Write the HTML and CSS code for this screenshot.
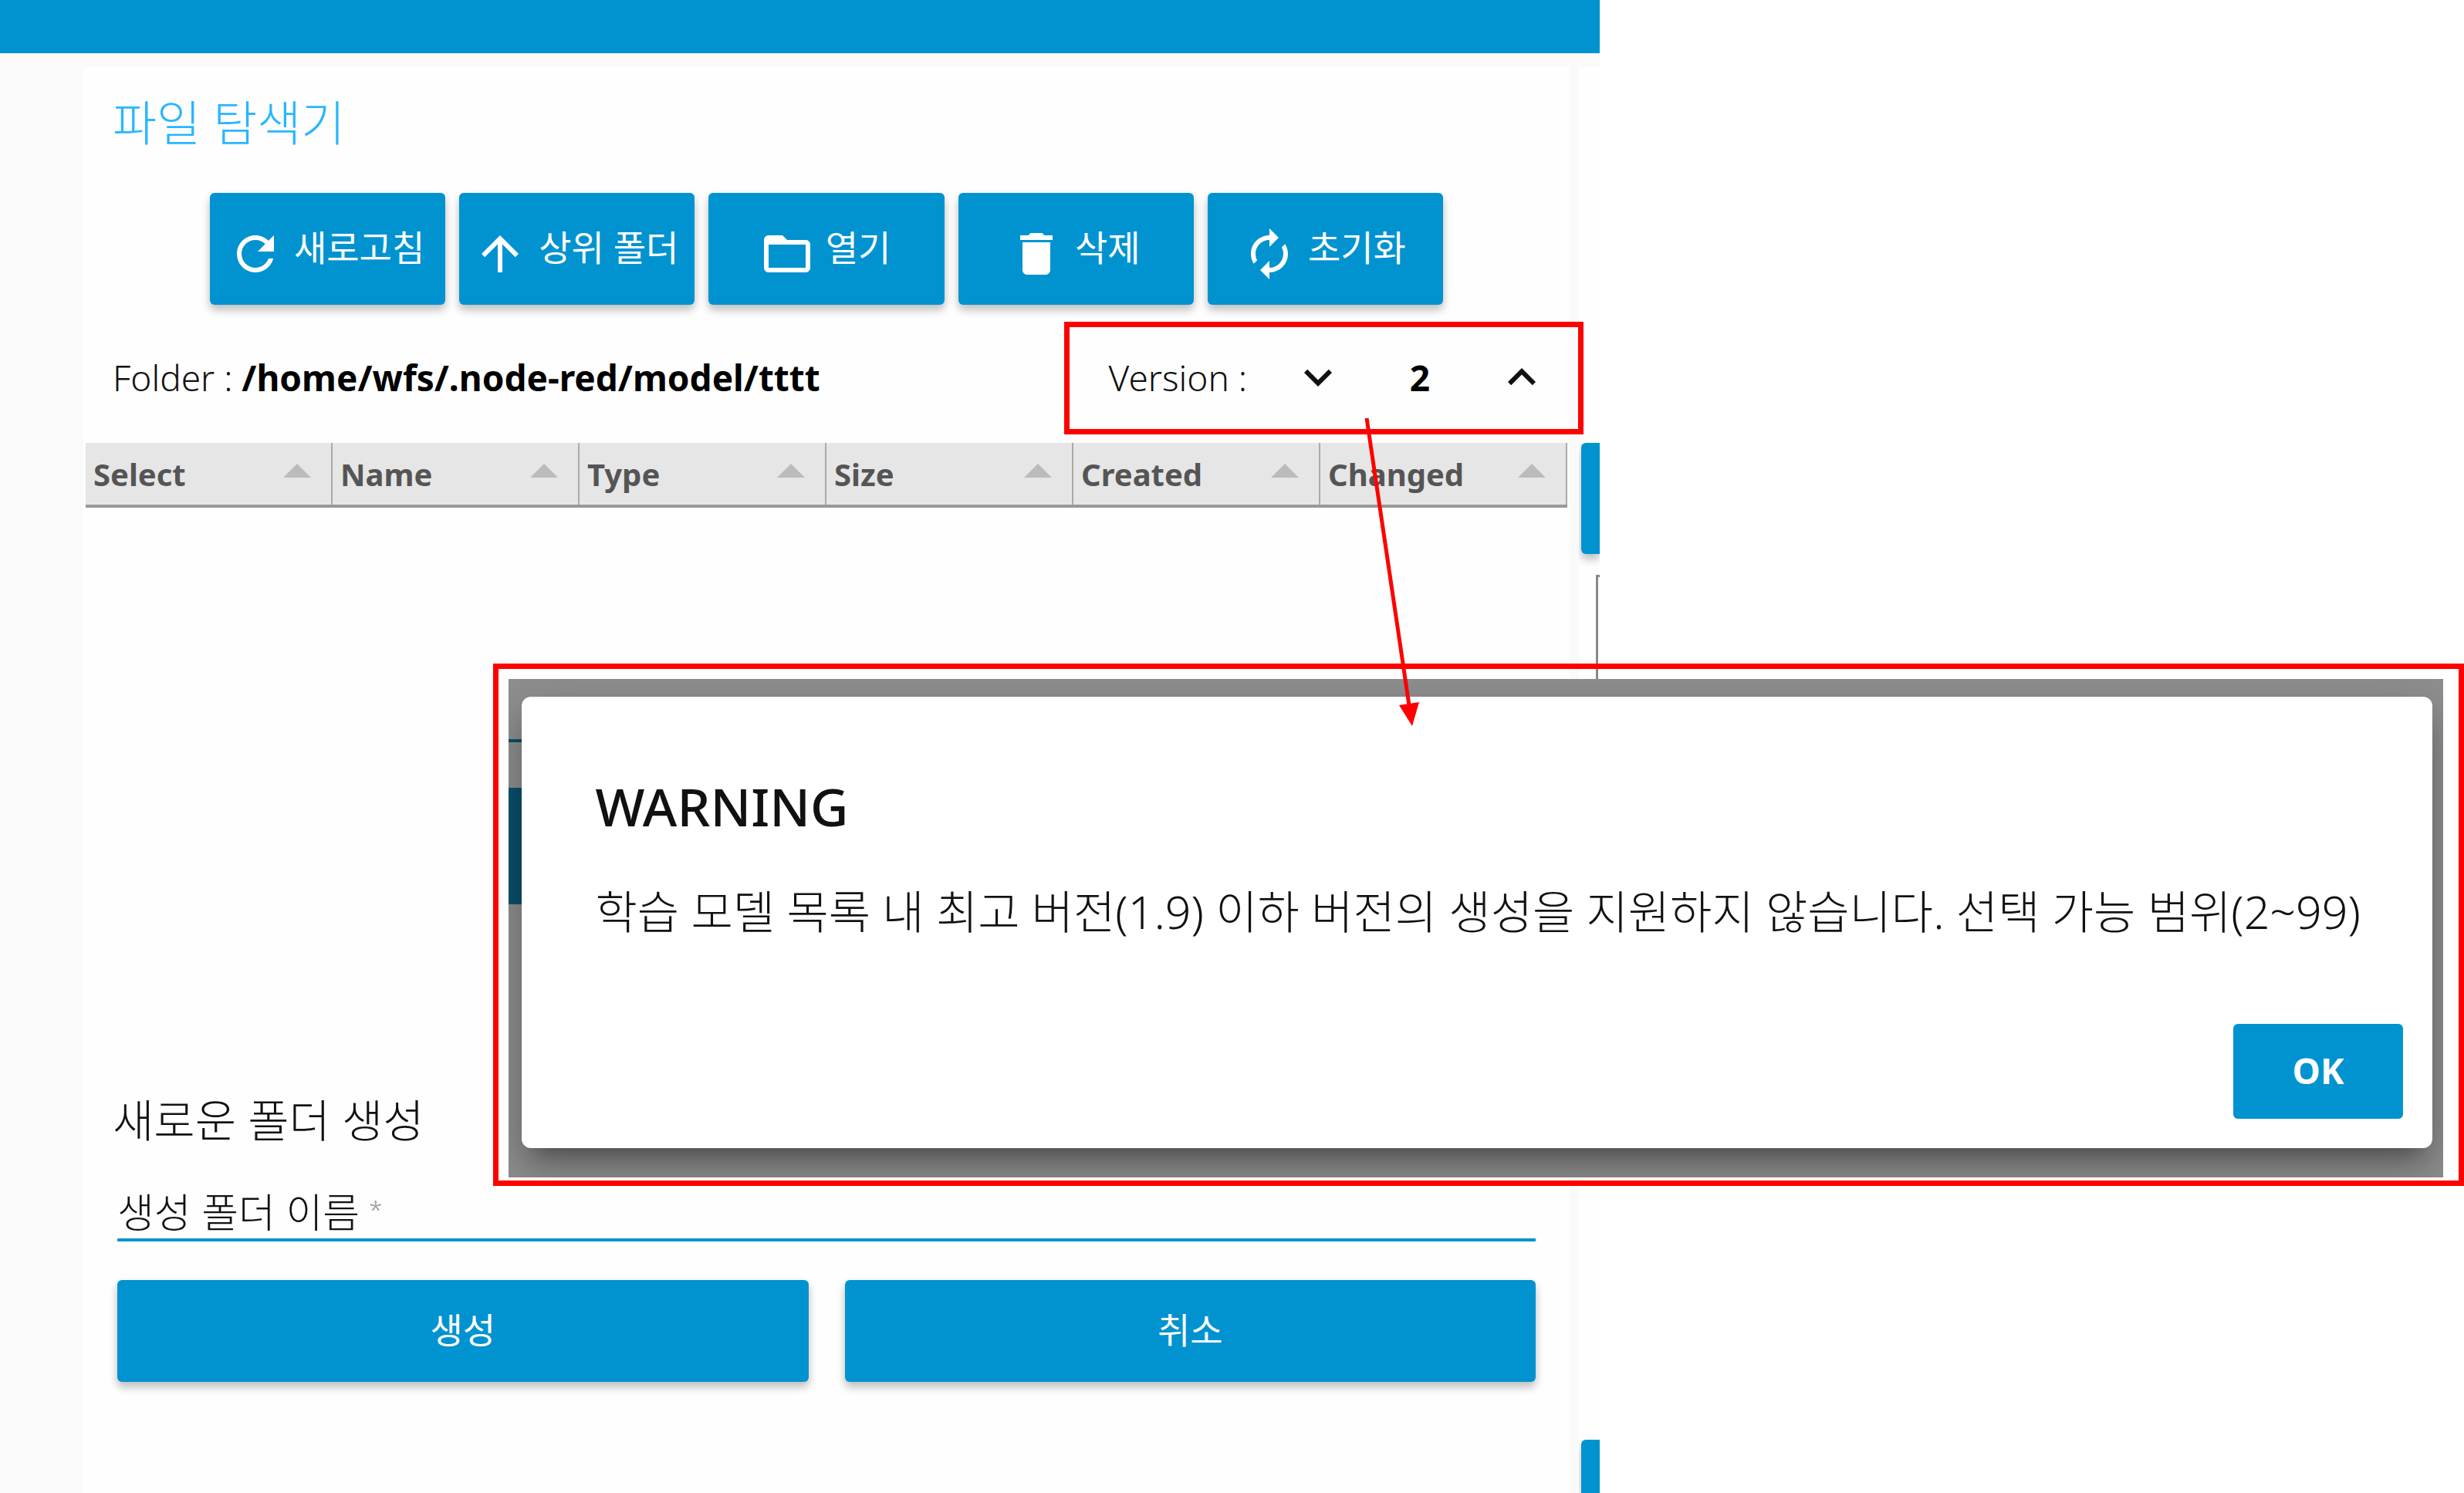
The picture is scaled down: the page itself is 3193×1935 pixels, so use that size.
FILE: index.html
```html
<!DOCTYPE html>
<html lang="ko">
<head>
<meta charset="utf-8">
<meta name="viewport" content="width=device-width, initial-scale=1">
<title>파일 탐색기</title>
<link rel="stylesheet" href="styles.css">
</head>
<body>
<div class="stage">
  <div class="app">
    <header class="topbar"></header>
    <div class="workspace">
      <main class="card">
        <h1 class="card-title">파일 탐색기</h1>
        <div class="toolbar">
          <button class="btn tool" type="button"><svg class="icon" viewBox="0 0 24 24" aria-hidden="true"><path d="M17.65 6.35C16.2 4.9 14.21 4 12 4c-4.42 0-7.99 3.58-7.99 8s3.57 8 7.99 8c3.73 0 6.84-2.55 7.73-6h-2.08c-.82 2.33-3.04 4-5.65 4-3.31 0-6-2.69-6-6s2.69-6 6-6c1.66 0 3.14.69 4.22 1.78L13 11h7V4l-2.35 2.35z"/></svg><span>새로고침</span></button>
          <button class="btn tool" type="button"><svg class="icon" viewBox="0 0 24 24" aria-hidden="true"><path d="M4 12l1.41 1.41L11 7.83V20h2V7.83l5.58 5.59L20 12l-8-8-8 8z"/></svg><span>상위 폴더</span></button>
          <button class="btn tool" type="button"><svg class="icon" viewBox="0 0 24 24" aria-hidden="true"><path d="M20 6h-8l-2-2H4c-1.1 0-1.99.9-1.99 2L2 18c0 1.1.9 2 2 2h16c1.1 0 2-.9 2-2V8c0-1.1-.9-2-2-2zm0 12H4V8h16v10z"/></svg><span>열기</span></button>
          <button class="btn tool" type="button"><svg class="icon" viewBox="0 0 24 24" aria-hidden="true"><path d="M6 19c0 1.1.9 2 2 2h8c1.1 0 2-.9 2-2V7H6v12zM19 4h-3.5l-1-1h-5l-1 1H5v2h14V4z"/></svg><span>삭제</span></button>
          <button class="btn tool" type="button"><svg class="icon" viewBox="0 0 24 24" aria-hidden="true"><path d="M12 6v3l4-4-4-4v3c-4.42 0-8 3.58-8 8 0 1.57.46 3.03 1.24 4.26L6.7 14.8c-.45-.83-.7-1.79-.7-2.8 0-3.31 2.69-6 6-6zm6.76 1.74L17.3 9.2c.44.84.7 1.79.7 2.8 0 3.31-2.69 6-6 6v-3l-4 4 4 4v-3c4.42 0 8-3.58 8-8 0-1.57-.46-3.03-1.24-4.26z"/></svg><span>초기화</span></button>
        </div>
        <div class="path-row">
          <p class="path">Folder : <strong>/home/wfs/.node-red/model/tttt</strong></p>
          <div class="version">
            <label class="version-label" for="version">Version :</label>
            <button class="step" type="button" aria-label="버전 내리기"><svg class="icon" viewBox="0 0 24 24" aria-hidden="true"><path d="M16.59 8.59L12 13.17 7.41 8.59 6 10l6 6 6-6z"/></svg></button>
            <output class="version-value" id="version">2</output>
            <button class="step" type="button" aria-label="버전 올리기"><svg class="icon" viewBox="0 0 24 24" aria-hidden="true"><path d="M12 8l-6 6 1.41 1.41L12 10.83l4.59 4.58L18 14z"/></svg></button>
          </div>
          <span class="highlight"></span>
        </div>
        <div class="files">
          <table class="file-table">
            <thead>
              <tr><th scope="col">Select</th><th scope="col">Name</th><th scope="col">Type</th><th scope="col">Size</th><th scope="col">Created</th><th scope="col">Changed</th></tr>
            </thead>
          </table>
        </div>
        <form class="create">
          <h2 class="create-title">새로운 폴더 생성</h2>
          <div class="field">
            <label class="field-label" for="folder-name">생성 폴더 이름<span class="required">*</span></label>
            <input class="field-input" id="folder-name" type="text">
          </div>
          <div class="create-actions">
            <button class="btn wide" type="button">생성</button>
            <button class="btn wide" type="button">취소</button>
          </div>
        </form>
      </main>
      <aside class="side">
        <div class="side-button"></div>
        <div class="side-box"></div>
        <div class="side-button side-button-last"></div>
      </aside>
    </div>
  </div>

  <section class="callout" role="dialog" aria-labelledby="warning-title">
    <div class="backdrop">
      <span class="dim-line"></span>
      <span class="dim-block"></span>
      <div class="dialog">
        <h2 class="dialog-title" id="warning-title">WARNING</h2>
        <p class="dialog-text">학습 모델 목록 내 최고 버전(1.9) 이하 버전의 생성을 지원하지 않습니다. 선택 가능 범위(2~99)</p>
        <div class="dialog-actions"><button class="ok" type="button">OK</button></div>
      </div>
    </div>
  </section>

  <svg class="pointer" viewBox="0 0 90 402" aria-hidden="true">
    <path d="M11 2L66 374" fill="none" stroke="#ff0000" stroke-width="5"/>
    <path d="M53 374L79 370L70 401z" fill="#ff0000"/>
  </svg>
</div>
</body>
</html>
```
FILE: styles.css
```css
:root {
  --blue: #0093d0;
  --red: #ff0000;
}

* {
  box-sizing: border-box;
}

body {
  margin: 0;
  background: #fff;
  color: #111;
  font-family: "Noto Sans", "Noto Sans CJK KR", sans-serif;
  font-size: 46px;
}

h1, h2, p {
  margin: 0;
  font-weight: 400;
}

button {
  border: 0;
  padding: 0;
  font: inherit;
}

.stage {
  position: relative;
  display: grid;
  grid-template-columns: 2073fr 1120fr;
  min-height: 100vh;
  overflow: hidden;
}

.app {
  display: flex;
  flex-direction: column;
  background: #fafafa;
}

.topbar {
  height: 72px;
  background: var(--blue);
  border-bottom: 3px solid #fff;
}

.workspace {
  flex: 1;
  display: flex;
  gap: 12px;
  padding: 15px 0 0 108px;
}

.card {
  flex: 1;
  padding-top: 36px;
  background: #fefefe;
}

.card-title {
  padding-left: 38px;
  color: #29b6ff;
  font-size: 62px;
  font-weight: 300;
  line-height: 72px;
}

.btn {
  background: var(--blue);
  color: #fff;
  border-radius: 6px;
  box-shadow: 0 4px 12px rgba(0, 0, 0, .12), 0 8px 12px rgba(0, 0, 0, .16);
}

.icon {
  display: block;
  width: 72px;
  height: 72px;
  fill: currentColor;
}

.toolbar {
  display: grid;
  grid-template-columns: repeat(5, 1fr);
  gap: 18px;
  margin: 55px 164px 0;
}

.tool {
  display: flex;
  align-items: center;
  justify-content: center;
  gap: 14px;
  height: 145px;
  padding: 0 4px 10px 0;
  font-size: 46px;
  white-space: nowrap;
}

.tool .icon {
  margin-top: 22px;
}

.path-row {
  position: relative;
  display: flex;
  align-items: center;
  justify-content: space-between;
  height: 179px;
  padding: 8px 26px 0 38px;
}

.path,
.version-label {
  font-weight: 300;
}

.path strong,
.version-value {
  color: #000;
  font-weight: 700;
}

.version {
  display: flex;
  align-items: center;
}

.version-label {
  margin-right: 56px;
}

.step {
  background: none;
  color: #111;
}

.version-value {
  width: 192px;
  text-align: center;
}

.highlight {
  position: absolute;
  top: 22px;
  right: -18px;
  width: 673px;
  height: 146px;
  border: 7px solid var(--red);
}

.files {
  min-height: 842px;
  padding: 0 3px;
}

.file-table {
  width: 100%;
  table-layout: fixed;
  border-collapse: separate;
  border-spacing: 0;
  border-bottom: 4px solid #999;
  background: #e6e6e6;
}

.file-table th {
  height: 80px;
  padding: 2px 26px 0 10px;
  border-right: 2px solid #aaa;
  color: #555;
  font-size: 40px;
  font-weight: 700;
  line-height: 72px;
  text-align: left;
}

.file-table th::after {
  content: "";
  float: right;
  margin-top: 22px;
  border: 18px solid transparent;
  border-top-width: 0;
  border-bottom-color: #bbb;
}

.create {
  padding: 0 44px 0 38px;
}

.create-title {
  font-size: 58px;
  line-height: 72px;
  font-weight: 300;
}

.field {
  display: flex;
  gap: 10px;
  margin: 53px 0 50px 6px;
  border-bottom: 4px solid var(--blue);
  font-size: 52px;
  line-height: 60px;
}

.field-label {
  display: flex;
  gap: 12px;
  height: 64px;
  font-weight: 300;
}

.required {
  color: #999;
  font-size: 32px;
  line-height: 52px;
}

.field-input {
  flex: 1;
  min-width: 0;
  height: 64px;
  border: 0;
  padding: 0;
  outline: 0;
  background: none;
  font: inherit;
}

.create-actions {
  display: grid;
  grid-template-columns: 1fr 1fr;
  gap: 47px;
  margin-left: 6px;
}

.wide {
  height: 132px;
  padding-bottom: 8px;
  font-size: 46px;
}

/* Left edge of the neighbouring card, cut off by the window */
.side {
  display: flex;
  flex-direction: column;
  width: 27px;
  padding-top: 487px;
  overflow: hidden;
  background: #fefefe;
}

.side-button {
  height: 144px;
  margin-left: 3px;
  border-radius: 6px 0 0 6px;
  background: var(--blue);
  box-shadow: 0 4px 12px rgba(0, 0, 0, .12), 0 8px 12px rgba(0, 0, 0, .16);
}

.side-button-last {
  height: 69px;
  border-radius: 6px 0 0 0;
}

.side-box {
  height: 700px;
  margin: 27px 0 auto 22px;
  border: solid #888;
  border-width: 3px 0 0 3px;
}

.callout {
  position: absolute;
  top: 860px;
  left: 20%;
  right: 0;
  padding: 13px 20px 4px 13px;
  border: 7px solid var(--red);
}

.backdrop {
  position: relative;
  overflow: hidden;
  padding: 23px 14px 38px 17px;
  background: #8e8e8e;
}

.dim-line,
.dim-block {
  position: absolute;
  left: 0;
  width: 30px;
  background: #0b506c;
}

.dim-line {
  top: 78px;
  height: 4px;
}

.dim-block {
  top: 141px;
  height: 151px;
}

.dialog {
  position: relative;
  padding: 106px 38px 38px 96px;
  border-radius: 12px;
  background: #fff;
  box-shadow: 0 22px 30px -14px rgba(0, 0, 0, .36), 0 24px 60px 6px rgba(0, 0, 0, .2);
}

.dialog-title {
  font-size: 68px;
  font-weight: 500;
  line-height: 72px;
}

.dialog-text {
  margin-top: 64px;
  font-size: 59px;
  font-weight: 300;
  line-height: 72px;
  white-space: nowrap;
}

.dialog-actions {
  display: flex;
  justify-content: flex-end;
  margin-top: 110px;
}

.ok {
  width: 220px;
  height: 123px;
  padding-bottom: 4px;
  border-radius: 6px;
  background: var(--blue);
  color: #fff;
  font-weight: 700;
}

.pointer {
  position: absolute;
  top: 540px;
  left: 1760px;
  width: 90px;
  height: 402px;
}
```
